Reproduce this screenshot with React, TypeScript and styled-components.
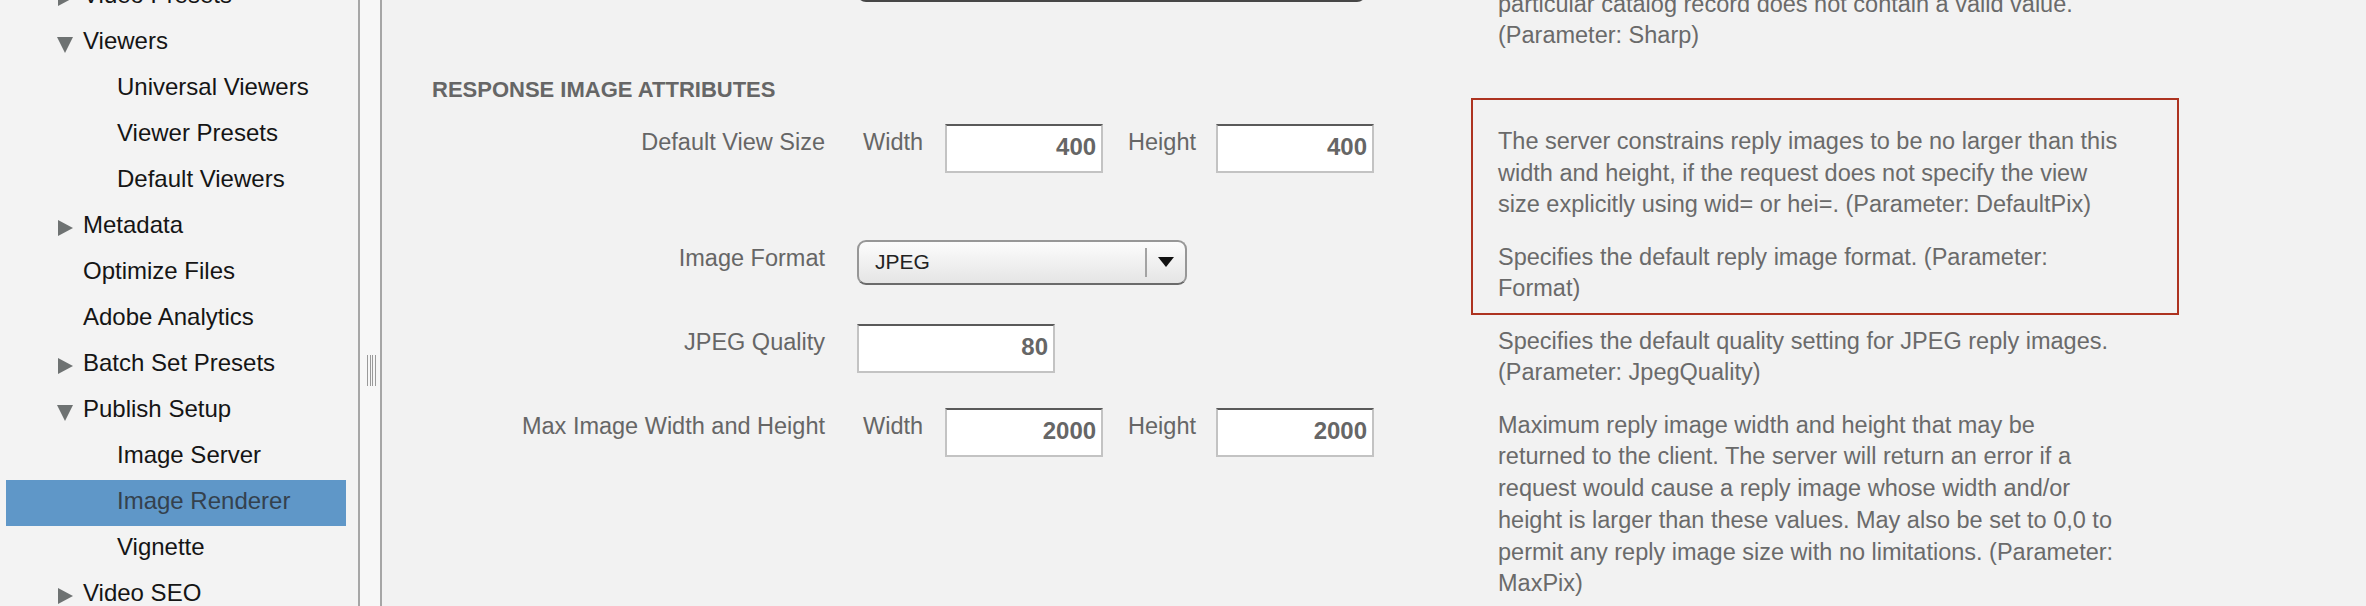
import React from "react";
import styled, { createGlobalStyle } from "styled-components";

const GlobalStyle = createGlobalStyle`
  html, body { margin: 0; padding: 0; background: #f2f2f2; overflow: hidden; }
  body { font-family: "Liberation Sans", Arial, Helvetica, sans-serif; }
  *, *::before, *::after { box-sizing: border-box; }
`;

const Page = styled.div`
  display: flex;
  width: 2366px;
  height: 606px;
  overflow: hidden;
  background: #f2f2f2;
`;

/* ---------- Sidebar ---------- */

const Sidebar = styled.nav`
  flex: 0 0 360px;
  height: 100%;
  border-right: 2px solid #a6a6a6;
  background: #f3f3f3;
  overflow: hidden;
`;

const NavList = styled.ul`
  list-style: none;
  margin: -26px 0 0 0;
  padding: 0;
`;

const NavItem = styled.li<{ $level: number; $selected?: boolean }>`
  display: flex;
  align-items: center;
  width: 340px;
  height: 46px;
  margin-left: 6px;
  padding-left: ${(p) => (p.$level === 0 ? 51 : 111)}px;
  padding-bottom: 4px;
  font-size: 24px;
  line-height: 42px;
  white-space: nowrap;
  color: ${(p) => (p.$selected ? "#34414e" : "#151515")};
  background: ${(p) => (p.$selected ? "#5f97c8" : "transparent")};
`;

const ToggleSlot = styled.span`
  flex: 0 0 26px;
  display: flex;
  align-items: center;
`;

const Toggle = styled.span<{ $open: boolean }>`
  width: 0;
  height: 0;
  ${(p) =>
    p.$open
      ? `
    margin-top: 8px;
    border-left: 8.5px solid transparent;
    border-right: 8.5px solid transparent;
    border-top: 16px solid #6e7272;
  `
      : `
    margin-top: 5px;
    margin-left: 1px;
    border-top: 8px solid transparent;
    border-bottom: 8px solid transparent;
    border-left: 15px solid #6e7272;
  `}
`;

/* ---------- Splitter ---------- */

const Splitter = styled.div`
  flex: 0 0 22px;
  height: 100%;
  background: #f7f7f7;
  border-right: 2px solid #a6a6a6;
  display: flex;
  flex-direction: column;
  align-items: center;
`;

const Grip = styled.div`
  margin-top: 355px;
  margin-left: 3px;
  width: 9px;
  height: 31px;
  background: repeating-linear-gradient(
    to right,
    #9a9a9a 0px,
    #9a9a9a 1px,
    transparent 1px,
    transparent 2.6px
  );
`;

/* ---------- Main ---------- */

const Main = styled.main`
  flex: 1;
  height: 100%;
  padding-left: 50px;
  overflow: hidden;
  background: #f2f2f2;
`;

const Content = styled.div`
  margin-top: -45px;
`;

const Row = styled.div`
  display: grid;
  grid-template-columns: 393px 673px 630px;
  align-items: start;
  padding-bottom: 18.6px;
`;

const Label = styled.div`
  padding-top: 3px;
  text-align: right;
  font-size: 23.5px;
  line-height: 31.7px;
  color: #666;
  white-space: nowrap;
`;

const Control = styled.div`
  display: flex;
  align-items: flex-start;
  padding-left: 32px;
`;

const InlineLabel = styled.span<{ $ml: number; $mr: number }>`
  padding-top: 3px;
  margin-left: ${(p) => p.$ml}px;
  margin-right: ${(p) => p.$mr}px;
  font-size: 23.5px;
  line-height: 31.7px;
  color: #666;
`;

const TextInput = styled.input<{ $w: number }>`
  width: ${(p) => p.$w}px;
  height: 49px;
  margin: 0;
  padding: 0 5px 3px 5px;
  border: 2px solid #c3c3c3;
  border-top: 2px solid #5a5a5a;
  border-radius: 0;
  background: #fff;
  text-align: right;
  font-family: "Liberation Sans", Arial, Helvetica, sans-serif;
  font-weight: bold;
  font-size: 24px;
  color: #666;
  outline: none;
`;

const SelectBox = styled.div<{ $w: number; $h: number; $darkEdge?: boolean }>`
  display: flex;
  align-items: center;
  width: ${(p) => p.$w}px;
  height: ${(p) => p.$h}px;
  border: 2px solid #979797;
  border-bottom-color: ${(p) => (p.$darkEdge ? "#474747" : "#6b6b6b")};
  border-radius: 9px;
  background: linear-gradient(#fcfcfc, #e5e5e5);
`;

const SelectValue = styled.span`
  flex: 1;
  padding-left: 16px;
  font-size: 21px;
  color: #222;
`;

const SelectDivider = styled.span`
  width: 2px;
  height: 29px;
  background: #a3a3a3;
`;

const SelectArrow = styled.span`
  width: 38px;
  display: flex;
  justify-content: center;
  &::after {
    content: "";
    border-left: 8px solid transparent;
    border-right: 8px solid transparent;
    border-top: 10px solid #111;
  }
`;

const Heading = styled.h3`
  margin: 6px 0 22.3px 0;
  font-size: 22px;
  line-height: 25px;
  font-weight: bold;
  color: #666;
  letter-spacing: 0;
`;

const Description = styled.div`
  position: relative;
  padding-top: 2px;
  font-size: 23.5px;
  line-height: 31.7px;
  color: #6a6a6a;
`;

const Para = styled.p`
  margin: 0;
`;

const Callout = styled.div`
  position: absolute;
  left: -27px;
  top: -26px;
  width: 708px;
  height: 217px;
  border: 2px solid #ad3320;
  pointer-events: none;
`;

type NavEntry = { label: string; level: number; toggle?: "open" | "closed"; selected?: boolean };

const nav: NavEntry[] = [
  { label: "Video Presets", level: 0, toggle: "closed" },
  { label: "Viewers", level: 0, toggle: "open" },
  { label: "Universal Viewers", level: 1 },
  { label: "Viewer Presets", level: 1 },
  { label: "Default Viewers", level: 1 },
  { label: "Metadata", level: 0, toggle: "closed" },
  { label: "Optimize Files", level: 0 },
  { label: "Adobe Analytics", level: 0 },
  { label: "Batch Set Presets", level: 0, toggle: "closed" },
  { label: "Publish Setup", level: 0, toggle: "open" },
  { label: "Image Server", level: 1 },
  { label: "Image Renderer", level: 1, selected: true },
  { label: "Vignette", level: 1 },
  { label: "Video SEO", level: 0, toggle: "closed" },
];

const Select: React.FC<{ w: number; h: number; value?: string; darkEdge?: boolean }> = ({
  w,
  h,
  value,
  darkEdge,
}) => (
  <SelectBox $w={w} $h={h} $darkEdge={darkEdge}>
    <SelectValue>{value}</SelectValue>
    <SelectDivider />
    <SelectArrow />
  </SelectBox>
);

const SizePair: React.FC<{ w: string; h: string }> = ({ w, h }) => (
  <>
    <InlineLabel $ml={6} $mr={22}>Width</InlineLabel>
    <TextInput $w={158} readOnly value={w} />
    <InlineLabel $ml={25} $mr={20}>Height</InlineLabel>
    <TextInput $w={158} readOnly value={h} />
  </>
);

export default function App() {
  return (
    <>
      <GlobalStyle />
      <Page>
        <Sidebar>
          <NavList>
            {nav.map((n) => (
              <NavItem key={n.label} $level={n.level} $selected={n.selected}>
                {n.level === 0 && (
                  <ToggleSlot>{n.toggle && <Toggle $open={n.toggle === "open"} />}</ToggleSlot>
                )}
                <span>{n.label}</span>
              </NavItem>
            ))}
          </NavList>
        </Sidebar>
        <Splitter>
          <Grip />
        </Splitter>
        <Main>
          <Content>
            <Row>
              <Label />
              <Control>
                <Select w={509} h={47} darkEdge />
              </Control>
              <Description>
                <Para>
                  Specifies the default sharpening mode applied when the particular catalog record
                  does not contain a valid value. (Parameter: Sharp)
                </Para>
              </Description>
            </Row>

            <Heading>RESPONSE IMAGE ATTRIBUTES</Heading>

            <Row>
              <Label>Default View Size</Label>
              <Control>
                <SizePair w="400" h="400" />
              </Control>
              <Description>
                <Callout />
                <Para>
                  The server constrains reply images to be no larger than this width and height, if
                  the request does not specify the view size explicitly using wid= or hei=.
                  (Parameter: DefaultPix)
                </Para>
              </Description>
            </Row>

            <Row>
              <Label>Image Format</Label>
              <Control>
                <Select w={330} h={45} value="JPEG" />
              </Control>
              <Description>
                <Para>Specifies the default reply image format. (Parameter: Format)</Para>
              </Description>
            </Row>

            <Row>
              <Label>JPEG Quality</Label>
              <Control>
                <TextInput $w={198} readOnly value="80" />
              </Control>
              <Description>
                <Para>
                  Specifies the default quality setting for JPEG reply images. (Parameter:
                  JpegQuality)
                </Para>
              </Description>
            </Row>

            <Row>
              <Label>Max Image Width and Height</Label>
              <Control>
                <SizePair w="2000" h="2000" />
              </Control>
              <Description>
                <Para>
                  Maximum reply image width and height that may be returned to the client. The
                  server will return an error if a request would cause a reply image whose width
                  and/or height is larger than these values. May also be set to 0,0 to permit any
                  reply image size with no limitations. (Parameter: MaxPix)
                </Para>
              </Description>
            </Row>
          </Content>
        </Main>
      </Page>
    </>
  );
}
